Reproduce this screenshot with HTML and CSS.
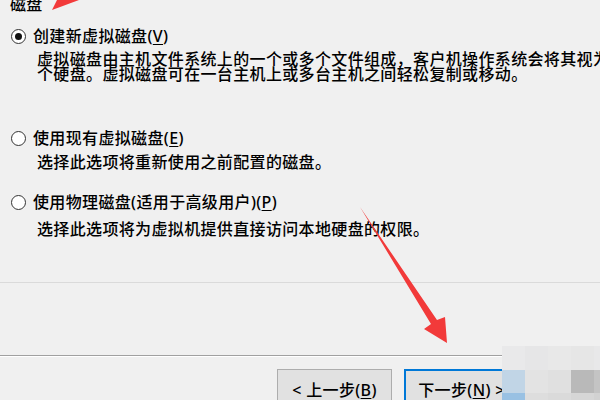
FILE: index.html
```html
<!DOCTYPE html>
<html lang="zh-CN">

<head>
    <meta charset="UTF-8">
    <meta name="viewport" content="width=device-width, initial-scale=1.0">
    <title>新建虚拟机向导 - 选择磁盘</title>
    <link rel="stylesheet" href="styles.css">
</head>

<body>

    <div class="dialog">
        <div class="section-title">磁盘</div>

        <div class="options">
            <div class="option option-first">
                <div class="choice"><span class="radio checked"></span><span>创建新虚拟磁盘(<u>V</u>)</span></div>
                <p class="desc">虚拟磁盘由主机文件系统上的一个或多个文件组成，客户机操作系统会将其视为一个硬盘。虚拟磁盘可在一台主机上或多台主机之间轻松复制或移动。</p>
            </div>

            <div class="option option-second">
                <div class="choice"><span class="radio"></span><span>使用现有虚拟磁盘(<u>E</u>)</span></div>
                <p class="desc">选择此选项将重新使用之前配置的磁盘。</p>
            </div>

            <div class="option option-third">
                <div class="choice"><span class="radio"></span><span>使用物理磁盘(适用于高级用户)(<u>P</u>)</span></div>
                <p class="desc desc-last">选择此选项将为虚拟机提供直接访问本地硬盘的权限。</p>
            </div>
        </div>

        <div class="divider divider-light"></div>
        <div class="divider divider-dark"></div>

        <div class="buttons">
            <button class="btn">&lt; 上一步(<u>B</u>)</button>
            <button class="btn btn-default">下一步(<u>N</u>) &gt;</button>
        </div>
    </div>

    <!-- blurred mosaic over the corner -->
    <div class="mosaic">
        <span class="m1"></span><span class="m2"></span><span class="m3"></span><span class="m4"></span><span class="m5"></span>
        <span class="m6"></span><span class="m7"></span><span class="m8"></span><span class="m9"></span><span class="m10"></span>
        <span class="m11"></span><span class="m12"></span><span class="m13"></span><span class="m14"></span><span class="m15"></span>
    </div>

    <!-- red annotation arrows -->
    <svg class="arrows" width="600" height="400" viewBox="0 0 600 400">
        <polygon points="52,10 57,0 79,0" fill="#f23a3a" />
        <polygon points="360,207 437,320 445,317 447,343 424,329 431,324" fill="#f23a3a" />
    </svg>

</body>

</html>
```

FILE: styles.css
```css
* {
    margin: 0;
    padding: 0;
    box-sizing: border-box;
}

html, body {
    width: 600px;
    height: 400px;
    overflow: hidden;
}

body {
    position: relative;
    background-color: #f0f0f0;
    color: #000;
    font-family: "Noto Sans", "Noto Sans CJK SC", sans-serif;
    font-size: 16px;
    font-weight: 500;
    line-height: 16px;
    letter-spacing: 0.35px;
}

u {
    text-decoration: underline;
    text-underline-offset: 2px;
}

/* 🔹 Section heading, cut by the top edge */
.section-title {
    margin-top: -4px;
    padding-left: 10px;
}

/* 🔹 Radio options */
.options {
    padding-left: 11px;
}

.option-first {
    margin-top: 16px;
}

.option-second {
    margin-top: 48px;
}

.option-third {
    margin-top: 24px;
}

.choice {
    display: flex;
    align-items: center;
    gap: 7px;
    white-space: nowrap;
}

.radio {
    flex: none;
    width: 15px;
    height: 15px;
    border: 1.5px solid #333;
    border-radius: 50%;
    background-color: #fff;
    display: flex;
    align-items: center;
    justify-content: center;
}

.radio.checked::after {
    content: "";
    width: 7px;
    height: 7px;
    border-radius: 50%;
    background-color: #111;
}

.desc {
    margin-top: 9px;
    padding-left: 26px;
    width: 621px;
    line-height: 15px;
}

.option-first .desc {
    margin-top: 8px;
}

.desc-last {
    margin-top: 12px;
}

/* 🔹 Separators */
.divider {
    height: 1px;
}

.divider-light {
    margin-top: 45px;
    background-color: #dadada;
}

.divider-dark {
    margin-top: 72px;
    width: 502px;
    height: 2px;
    border-top: 1px solid #a0a0a0;
    border-bottom: 1px solid #fff;
}

/* 🔹 Wizard buttons */
.buttons {
    display: flex;
    gap: 12px;
    padding-left: 277px;
    margin-top: 12px;
}

.btn {
    width: 115px;
    height: 42px;
    border: 1px solid #adadad;
    background-color: #e1e1e1;
    color: #000;
    font-family: inherit;
    font-size: 16px;
    font-weight: 500;
    line-height: 16px;
    letter-spacing: 0.35px;
}

.btn-default {
    border: 2px solid #0078d7;
}

/* 🔹 Pixelated corner */
.mosaic {
    position: absolute;
    left: 502px;
    top: 346px;
    display: grid;
    grid-template-columns: repeat(5, 23px);
    grid-template-rows: 24px 23px 7px;
}

.m1 { background-color: #e9e9ea; }
.m2 { background-color: #e6e6e7; }
.m3 { background-color: #e8e8e8; }
.m4 { background-color: #e6e6e6; }
.m5 { background-color: #e8e8e9; }
.m6 { background-color: #c1d5e6; }
.m7 { background-color: #e3e3e3; }
.m8 { background-color: #e0e0e0; }
.m9 { background-color: #b9b9b9; }
.m10 { background-color: #c4c4c4; }
.m11 { background-color: #99c1e3; }
.m12 { background-color: #dddddd; }
.m13 { background-color: #dadada; }
.m14 { background-color: #d6d6d6; }
.m15 { background-color: #d2d2d2; }

/* 🔹 Annotation arrows drawn over the dialog */
.arrows {
    position: absolute;
    left: 0;
    top: 0;
    pointer-events: none;
}
```
